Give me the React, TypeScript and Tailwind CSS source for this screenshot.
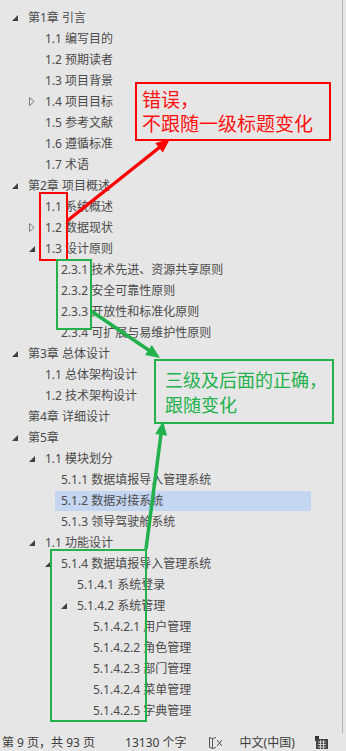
type Row = {
    level: number;
    text: string;
    icon?: "open" | "closed";
    active?: boolean;
};

const rows: Row[] = [
    { level: 1, text: "第1章 引言", icon: "open" },
    { level: 2, text: "1.1 编写目的" },
    { level: 2, text: "1.2 预期读者" },
    { level: 2, text: "1.3 项目背景" },
    { level: 2, text: "1.4 项目目标", icon: "closed" },
    { level: 2, text: "1.5 参考文献" },
    { level: 2, text: "1.6 遵循标准" },
    { level: 2, text: "1.7 术语" },
    { level: 1, text: "第2章 项目概述", icon: "open" },
    { level: 2, text: "1.1 系统概述" },
    { level: 2, text: "1.2 数据现状", icon: "closed" },
    { level: 2, text: "1.3 设计原则", icon: "open" },
    { level: 3, text: "2.3.1 技术先进、资源共享原则" },
    { level: 3, text: "2.3.2 安全可靠性原则" },
    { level: 3, text: "2.3.3 开放性和标准化原则" },
    { level: 3, text: "2.3.4 可扩展与易维护性原则" },
    { level: 1, text: "第3章 总体设计", icon: "open" },
    { level: 2, text: "1.1 总体架构设计" },
    { level: 2, text: "1.2 技术架构设计" },
    { level: 1, text: "第4章 详细设计" },
    { level: 1, text: "第5章", icon: "open" },
    { level: 2, text: "1.1 模块划分", icon: "open" },
    { level: 3, text: "5.1.1 数据填报导入管理系统" },
    { level: 3, text: "5.1.2 数据对接系统", active: true },
    { level: 3, text: "5.1.3 领导驾驶舱系统" },
    { level: 2, text: "1.1 功能设计", icon: "open" },
    { level: 3, text: "5.1.4 数据填报导入管理系统", icon: "open" },
    { level: 4, text: "5.1.4.1 系统登录" },
    { level: 4, text: "5.1.4.2 系统管理", icon: "open" },
    { level: 5, text: "5.1.4.2.1 用户管理" },
    { level: 5, text: "5.1.4.2.2 角色管理" },
    { level: 5, text: "5.1.4.2.3 部门管理" },
    { level: 5, text: "5.1.4.2.4 菜单管理" },
    { level: 5, text: "5.1.4.2.5 字典管理" },
];

const indent: Record<number, string> = {
    1: "pl-[12px]",
    2: "pl-[29px]",
    3: "pl-[45px]",
    4: "pl-[61px]",
    5: "pl-[77px]",
};

function Toggle({ icon }: { icon?: "open" | "closed" }) {
    return (
        <div className="w-[16px] h-full flex items-center">
            {icon === "open" && (
                <svg width="6" height="6" viewBox="0 0 6 6">
                    <polygon points="6,0 6,6 0,6" fill="#3f3f3f" />
                </svg>
            )}
            {icon === "closed" && (
                <svg width="6" height="9" viewBox="0 0 6 9">
                    <polygon points="0.5,0.5 5.2,4.5 0.5,8.5" fill="none" stroke="#7a7a7a" strokeWidth="1" />
                </svg>
            )}
        </div>
    );
}

function TreeRow({ row }: { row: Row }) {
    return (
        <div className={`h-[21px] flex items-center ${indent[row.level]}`}>
            <Toggle icon={row.icon} />
            {row.active ? (
                <div className="-ml-[6px] pl-[6px] w-[256px] h-[20px] flex items-center bg-[#c4d6f1]">
                    {row.text}
                </div>
            ) : (
                <span className="whitespace-nowrap">{row.text}</span>
            )}
        </div>
    );
}

export default function App() {
    return (
        <div
            className="w-[346px] h-[751px] bg-[#e6e6e6] text-[#4b4b4b] text-[12px] flex flex-col overflow-hidden relative"
            style={{ fontFamily: '"Noto Sans", "Noto Sans CJK SC", sans-serif' }}
        >
            {/* Navigation tree */}
            <div className="h-[734px] flex">
                <div className="flex-1 pt-[7px]">
                    {rows.map((row, i) => (
                        <TreeRow key={i} row={row} />
                    ))}
                </div>
                <div className="w-[4px] h-[733px] border-l border-[#b3b3b3]" />
            </div>

            {/* Status bar */}
            <div className="h-[17px] flex items-center text-[12px] text-[#3c3c3c] whitespace-nowrap">
                <span className="ml-[2px]">第 9 页，共 93 页</span>
                <span className="ml-[30px]">13130 个字</span>
                <svg className="ml-[21px]" width="15" height="14" viewBox="0 0 15 14" fill="none" stroke="#555" strokeWidth="1">
                    <path d="M1.5 1.5 L1.5 11.5 L4.5 12.5 L4.5 2.5 Z" />
                    <path d="M4.5 2.5 L8 1.5 M4.5 12.5 L8 11.5" />
                    <path d="M9 4 L14 10 M14 4 L9 10" />
                </svg>
                <span className="ml-[17px]">中文(中国)</span>
                <svg className="ml-[20px]" width="13" height="13" viewBox="0 0 13 13">
                    <rect x="0" y="0" width="4" height="5" fill="#333" />
                    <rect x="1" y="3" width="12" height="10" fill="#444" />
                    <path d="M3 6 H11 M3 8.5 H11 M3 11 H11 M5.5 4 V13 M8.5 4 V13" stroke="#e6e6e6" strokeWidth="0.8" />
                </svg>
            </div>

            {/* Red callout */}
            <div className="absolute left-[135px] top-[82px] w-[196px] h-[59px] border-2 border-[#ff0000] text-[#ff1010] text-[19px] leading-[24px] pl-[5px] pt-[4px]">
                <div>错误，</div>
                <div className="whitespace-nowrap">不跟随一级标题变化</div>
            </div>

            {/* Green callout */}
            <div className="absolute left-[154px] top-[359px] w-[180px] h-[65px] border-2 border-[#22b14c] text-[#22b14c] text-[18px] leading-[25px] pl-[9px] pt-[7px]">
                <div className="whitespace-nowrap">三级及后面的正确，</div>
                <div>跟随变化</div>
            </div>

            {/* Marker boxes */}
            <div className="absolute left-[39px] top-[192px] w-[29px] h-[69px] border-2 border-[#ff0000]" />
            <div className="absolute left-[56px] top-[259px] w-[36px] h-[71px] border-2 border-[#22b14c]" />
            <div className="absolute left-[50px] top-[549px] w-[97px] h-[173px] border-2 border-[#22b14c]" />

            {/* Arrows */}
            <svg className="absolute left-0 top-0 pointer-events-none" width="346" height="751" viewBox="0 0 346 751">
                <line x1="67" y1="221" x2="160" y2="147" stroke="#ff0000" strokeWidth="3.5" />
                <polygon points="170,139 162.8,152.4 155.3,143" fill="#ff0000" />
                <line x1="91" y1="311" x2="150" y2="351" stroke="#22b14c" strokeWidth="3.5" />
                <polygon points="160,358 145.1,355.1 151.8,345.1" fill="#22b14c" />
                <line x1="146" y1="549" x2="161" y2="434" stroke="#22b14c" strokeWidth="3.5" />
                <polygon points="163,421 167.1,435.7 155.2,434.1" fill="#22b14c" />
            </svg>
        </div>
    );
}
